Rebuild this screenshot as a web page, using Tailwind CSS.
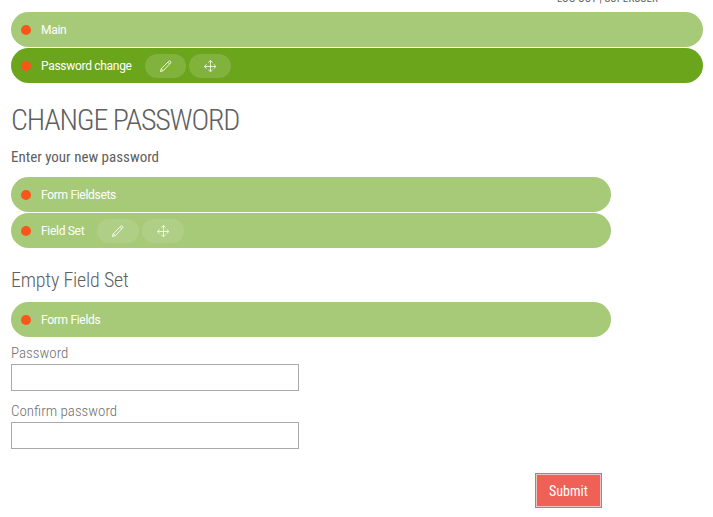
<!DOCTYPE html>
<html lang="en">
<head>
<meta charset="utf-8">
<title>Change password</title>
<script src="https://cdn.jsdelivr.net/npm/@tailwindcss/browser@4"></script>
</head>
<body class="h-[517px] overflow-hidden bg-white font-['Roboto_Condensed',Roboto,sans-serif] font-light text-[#606060] [font-stretch:75%]">
<svg class="hidden">
  <symbol id="pencil" viewBox="0 0 12 12" fill="none" stroke="currentColor" stroke-width=".85" stroke-linejoin="round"><path d="M.5 11.500l.7-2.700L8.700 1.300q1-.8 1.800 0t0 1.800L3.200 10.700zM7.800 2.200l1.800 1.800M1.200 8.800l2 1.900"/></symbol>
  <symbol id="move" viewBox="0 0 12 12" fill="none" stroke="currentColor" stroke-width=".8"><path d="M6.500 .7v10.600M.7 6.500h11.100M4.300 2.500L6.500 .5l2.200 2M4.300 9.800L6.500 11.700l2.200-1.900M2.500 4.300L.5 6.500l2 2.200M9.900 4.300l1.800 2.200-1.800 2.200"/></symbol>
</svg>
<header class="flex h-3 items-start overflow-hidden pl-[557px]"><div class="-mt-[7px] h-3 text-[11px] leading-[12px] font-normal tracking-[0.1px] whitespace-nowrap">LOG OUT | SUPERUSER</div></header>
<main class="ml-[11px] w-[692px]">
  <div class="flex h-[35px] items-center rounded-full bg-[#a7ca79] pl-[10px] font-[Roboto] text-[12px] font-normal tracking-[-0.3px] text-white [font-stretch:100%]"><i class="mr-[10px] size-[10px] rounded-full bg-[#fa551a]"></i><span>Main</span></div>
  <div class="mt-px flex h-[35px] items-center rounded-full bg-[#6aa51c] pl-[10px] font-[Roboto] text-[12px] font-normal tracking-[-0.3px] text-white [font-stretch:100%]"><i class="mr-[10px] size-[10px] rounded-full bg-[#fa551a]"></i><span class="w-[104px]">Password change</span>
    <span class="mr-[3px] flex h-6 w-[41px] items-center justify-center rounded-full bg-white/15"><svg class="size-3"><use href="#pencil"/></svg></span><span class="flex h-6 w-[42px] items-center justify-center rounded-full bg-white/15"><svg class="size-3"><use href="#move"/></svg></span></div>
  <h1 class="mt-[19px] h-9 text-[30px] leading-9 tracking-[-1.2px] whitespace-nowrap">CHANGE PASSWORD</h1>
  <p class="mt-[9px] h-5 text-[15px] leading-5 font-normal whitespace-nowrap">Enter your new password</p>
  <section class="mt-[10px] w-[600px]">
    <div class="flex h-[35px] items-center rounded-full bg-[#a7ca79] pl-[10px] font-[Roboto] text-[12px] font-normal tracking-[-0.3px] text-white [font-stretch:100%]"><i class="mr-[10px] size-[10px] rounded-full bg-[#fa551a]"></i><span>Form Fieldsets</span></div>
    <div class="mt-px flex h-[35px] items-center rounded-full bg-[#a7ca79] pl-[10px] font-[Roboto] text-[12px] font-normal tracking-[-0.3px] text-white [font-stretch:100%]"><i class="mr-[10px] size-[10px] rounded-full bg-[#fa551a]"></i><span class="w-[56px]">Field Set</span>
      <span class="mr-[3px] flex h-6 w-[42px] items-center justify-center rounded-full bg-white/10"><svg class="size-3"><use href="#pencil"/></svg></span><span class="flex h-6 w-[42px] items-center justify-center rounded-full bg-white/10"><svg class="size-3"><use href="#move"/></svg></span></div>
    <h2 class="mt-[18px] h-7 text-[20px] leading-7 tracking-[-0.2px] whitespace-nowrap">Empty Field Set</h2>
    <div class="mt-2 flex h-[35px] items-center rounded-full bg-[#a7ca79] pl-[10px] font-[Roboto] text-[12px] font-normal tracking-[-0.3px] text-white [font-stretch:100%]"><i class="mr-[10px] size-[10px] rounded-full bg-[#fa551a]"></i><span>Form Fields</span></div>
    <form>
      <label class="mt-[6px] block h-[21px] text-[15px] leading-5 whitespace-nowrap text-[#707070]" for="password">Password</label>
      <input id="password" type="password" class="block h-[27px] w-[288px] border border-[#a9a9a9] bg-white">
      <label class="mt-[10px] block h-[21px] text-[15px] leading-5 whitespace-nowrap text-[#707070]" for="confirm">Confirm password</label>
      <input id="confirm" type="password" class="block h-[27px] w-[288px] border border-[#a9a9a9] bg-white">
      <div class="mt-6 flex justify-end pr-[9px]"><button type="button" class="h-[35px] w-[67px] border border-[#ef6559] bg-[#ef6156] pt-[2px] text-[14px] font-normal text-white [font-stretch:75%] shadow-[inset_0_0_0_1px_#e8c6c2]">Submit</button></div>
    </form>
  </section>
</main>
</body>
</html>
